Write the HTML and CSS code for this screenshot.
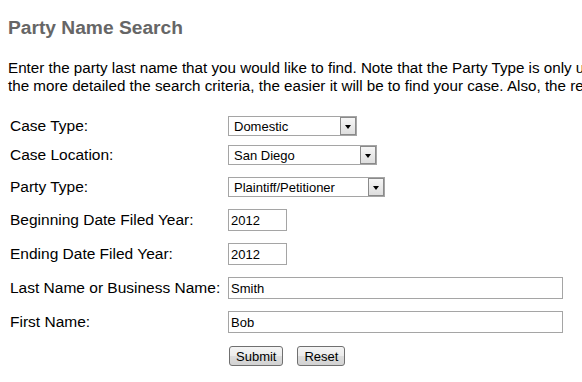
FILE: index.html
```html
<!DOCTYPE html>
<html>
<head>
	<meta charset="UTF-8">
	<meta name="viewport" content="width=device-width, initial-scale=1">
	<title>Party Name Search</title>
	<link rel="stylesheet" href="styles.css">
</head>
<body>

	<div class="page">
		<h2 class="title">Party Name Search</h2>
		<p class="intro">Enter the party last name that you would like to find. Note that the Party Type is only used to narrow down results, so<br>
		the more detailed the search criteria, the easier it will be to find your case. Also, the results are limited to 500 records.</p>

		<form class="search" action="#">
			<div class="field first">
				<label for="caseType">Case Type:</label>
				<span class="select type">
					<select id="caseType"><option>Domestic</option></select>
					<span class="arrow"></span>
				</span>
			</div>
			<div class="field">
				<label for="caseLocation">Case Location:</label>
				<span class="select location">
					<select id="caseLocation"><option>San Diego</option></select>
					<span class="arrow"></span>
				</span>
			</div>
			<div class="field">
				<label for="partyType">Party Type:</label>
				<span class="select party">
					<select id="partyType"><option>Plaintiff/Petitioner</option></select>
					<span class="arrow"></span>
				</span>
			</div>
			<div class="field">
				<label for="beginYear">Beginning Date Filed Year:</label>
				<input type="text" id="beginYear" class="year" value="2012">
			</div>
			<div class="field">
				<label for="endYear">Ending Date Filed Year:</label>
				<input type="text" id="endYear" class="year" value="2012">
			</div>
			<div class="field">
				<label for="lastName">Last Name or Business Name:</label>
				<input type="text" id="lastName" class="name" value="Smith">
			</div>
			<div class="field">
				<label for="firstName">First Name:</label>
				<input type="text" id="firstName" class="name" value="Bob">
			</div>
			<div class="field actions">
				<span></span>
				<div class="buttons">
					<button type="submit">Submit</button>
					<button type="reset">Reset</button>
				</div>
			</div>
		</form>
	</div>

</body>
</html>
```

FILE: styles.css
```css
html, body {
	margin: 0;
	padding: 0;
	overflow: hidden;
	background-color: #fff;
}
body {
	padding: 0 8px;
	font-family: 'Liberation Sans', Arial, sans-serif;
	color: #000;
}
.page {
	width: 900px;
}

/* Heading + intro text */
.title {
	margin: 17px 0 0;
	font-size: 19.2px;
	line-height: 22px;
	font-weight: bold;
	color: #666;
}
.intro {
	margin: 20px 0 0;
	font-size: 15.2px;
	line-height: 18px;
}

/* Form rows */
.search {
	display: flex;
	flex-direction: column;
	gap: 12px;
	margin-top: 21px;
	padding-left: 2px;
}
.field {
	display: grid;
	grid-template-columns: 218px auto;
	align-items: center;
	justify-items: start;
}
.field.first {
	margin-bottom: -3px;
}
.field.actions {
	margin-top: 1px;
}
.field label {
	font-size: 15.5px;
	line-height: 18px;
	margin-top: -1px;
}

/* Selects */
.select {
	position: relative;
	display: inline-block;
	height: 20px;
}
.select.type { width: 129px; }
.select.location { width: 149px; }
.select.party { width: 157px; }
.select select {
	-webkit-appearance: none;
	appearance: none;
	box-sizing: border-box;
	width: 100%;
	height: 100%;
	margin: 0;
	padding: 0 0 0 5px;
	border: 1px solid #a5a5a5;
	border-radius: 0;
	background: #fff;
	font-family: 'Liberation Sans', Arial, sans-serif;
	font-size: 13px;
	color: #000;
}
.select .arrow {
	position: absolute; /* sits over the right end of the select */
	top: 1px;
	right: 1px;
	bottom: 1px;
	width: 14px;
	border: 1px solid #8a8a8a;
	background: linear-gradient(#f6f6f6, #dedede);
	pointer-events: none;
}
.select .arrow::after {
	content: "";
	position: absolute;
	left: 4px;
	top: 7px;
	border-left: 3px solid transparent;
	border-right: 3px solid transparent;
	border-top: 4px solid #000;
}

/* Text inputs */
input[type="text"] {
	box-sizing: border-box;
	height: 22px;
	margin: 0;
	padding: 0 2px;
	border: 1px solid #a5a5a5;
	font-family: 'Liberation Sans', Arial, sans-serif;
	font-size: 13px;
	color: #000;
}
input.year { width: 59px; }
input.name { width: 335px; }

/* Buttons */
.buttons {
	display: flex;
	gap: 14px;
	padding-left: 1px;
}
.buttons button {
	height: 20px;
	margin: 0;
	padding: 0 6px;
	border: 1px solid #707070;
	border-radius: 3px;
	background: linear-gradient(#f4f4f4 0%, #ececec 48%, #dddddd 52%, #d2d2d2 100%);
	font-family: 'Liberation Sans', Arial, sans-serif;
	font-size: 13px;
	color: #000;
}
```
